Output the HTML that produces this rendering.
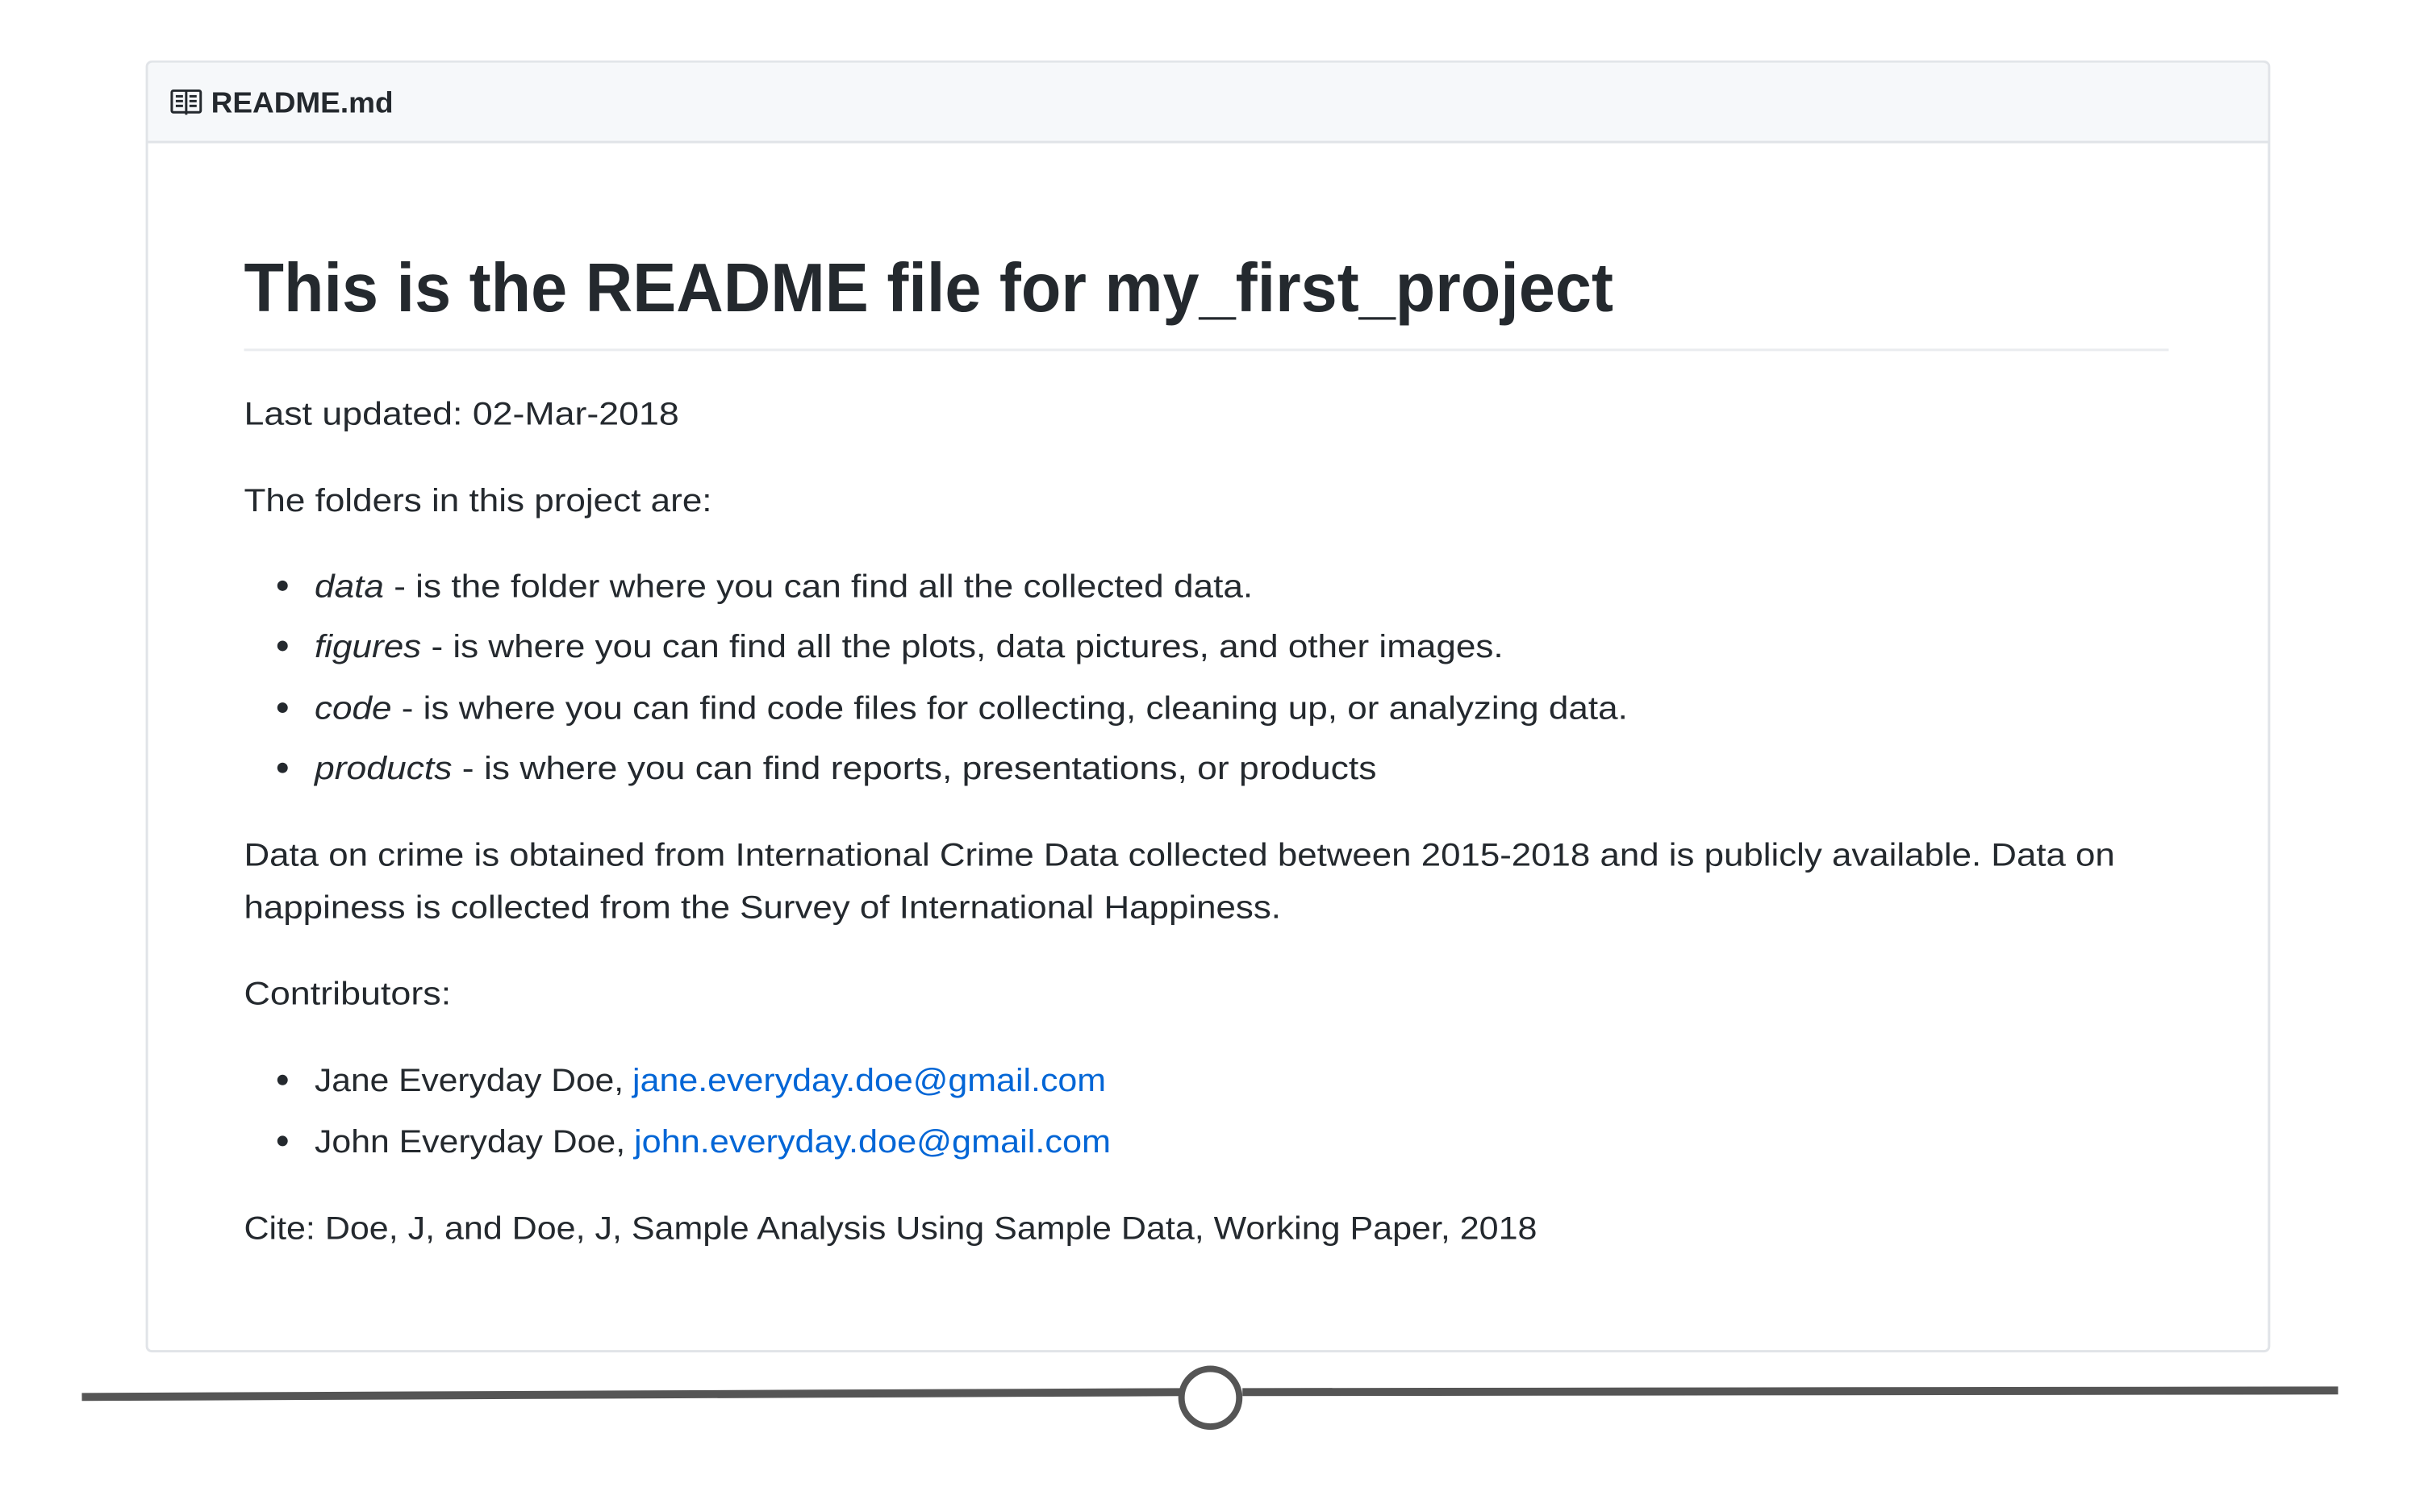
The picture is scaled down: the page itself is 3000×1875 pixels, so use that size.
<!DOCTYPE html>
<html><head><meta charset="utf-8"><style>
html,body{margin:0;padding:0;background:#fff;width:3000px;height:1875px;overflow:hidden}
svg{display:block}
text{font-family:"Liberation Sans",Arial,sans-serif;fill:#24292e}
</style></head><body>
<svg width="3000" height="1875" viewBox="0 0 3000 1875">
<g transform="scale(0.995)">
<rect x="183" y="77" width="2644" height="1607" rx="6" fill="#fff" stroke="#e1e4e8" stroke-width="3"/>
<path d="M184.5 177 V83 a5 5 0 0 1 5-5 H2820 a5 5 0 0 1 5 5 V177 Z" fill="#f6f8fa"/>
<line x1="183" y1="177" x2="2827" y2="177" stroke="#e1e4e8" stroke-width="3"/>
<g fill="none" stroke="#24292e" stroke-width="3">
<rect x="214" y="113" width="36" height="27" rx="2"/>
<line x1="232" y1="113" x2="232" y2="143"/>
<line x1="219" y1="120" x2="228" y2="120"/><line x1="219" y1="126" x2="228" y2="126"/><line x1="219" y1="132" x2="228" y2="132"/>
<line x1="236" y1="120" x2="245" y2="120"/><line x1="236" y1="126" x2="245" y2="126"/><line x1="236" y1="132" x2="245" y2="132"/>
</g>
<text x="263" y="140" font-size="36" font-weight="bold" textLength="227" lengthAdjust="spacingAndGlyphs">README.md</text>
<text x="304" y="388" font-size="86" font-weight="bold" textLength="1706" lengthAdjust="spacingAndGlyphs">This is the README file for my_first_project</text>
<line x1="304" y1="436" x2="2702" y2="436" stroke="#eaecef" stroke-width="3"/>
<g font-size="40">
<text x="304" y="529" textLength="542" lengthAdjust="spacingAndGlyphs">Last updated: 02-Mar-2018</text>
<text x="304" y="637" textLength="583" lengthAdjust="spacingAndGlyphs">The folders in this project are:</text>
<text x="392" y="744" textLength="1169" lengthAdjust="spacingAndGlyphs"><tspan font-style="italic">data</tspan> - is the folder where you can find all the collected data.</text>
<text x="392" y="819" textLength="1481" lengthAdjust="spacingAndGlyphs"><tspan font-style="italic">figures</tspan> - is where you can find all the plots, data pictures, and other images.</text>
<text x="392" y="896" textLength="1636" lengthAdjust="spacingAndGlyphs"><tspan font-style="italic">code</tspan> - is where you can find code files for collecting, cleaning up, or analyzing data.</text>
<text x="392" y="971" textLength="1323" lengthAdjust="spacingAndGlyphs"><tspan font-style="italic">products</tspan> - is where you can find reports, presentations, or products</text>
<text x="304" y="1079" textLength="2331" lengthAdjust="spacingAndGlyphs">Data on crime is obtained from International Crime Data collected between 2015-2018 and is publicly available. Data on</text>
<text x="304" y="1144" textLength="1292" lengthAdjust="spacingAndGlyphs">happiness is collected from the Survey of International Happiness.</text>
<text x="304" y="1252" textLength="258" lengthAdjust="spacingAndGlyphs">Contributors:</text>
<text x="392" y="1360" textLength="385" lengthAdjust="spacingAndGlyphs">Jane Everyday Doe,</text>
<text x="788" y="1360" textLength="590" lengthAdjust="spacingAndGlyphs" style="fill:#0366d6">jane.everyday.doe@gmail.com</text>
<text x="392" y="1436" textLength="387" lengthAdjust="spacingAndGlyphs">John Everyday Doe,</text>
<text x="790" y="1436" textLength="594" lengthAdjust="spacingAndGlyphs" style="fill:#0366d6">john.everyday.doe@gmail.com</text>
<text x="304" y="1544" textLength="1611" lengthAdjust="spacingAndGlyphs">Cite: Doe, J, and Doe, J, Sample Analysis Using Sample Data, Working Paper, 2018</text>
</g>
<g fill="#24292e">
<circle cx="352" cy="730" r="6.5"/><circle cx="352" cy="805" r="6.5"/><circle cx="352" cy="882" r="6.5"/><circle cx="352" cy="957" r="6.5"/>
<circle cx="352" cy="1346" r="6.5"/><circle cx="352" cy="1422" r="6.5"/>
</g>
<path d="M102 1741 L1470 1735" stroke="#555" stroke-width="10"/>
<path d="M1548 1735 L2913 1733" stroke="#555" stroke-width="10"/>
<circle cx="1508" cy="1742" r="36" fill="#fff" stroke="#555" stroke-width="8"/>
</g>
</svg>
</body></html>
